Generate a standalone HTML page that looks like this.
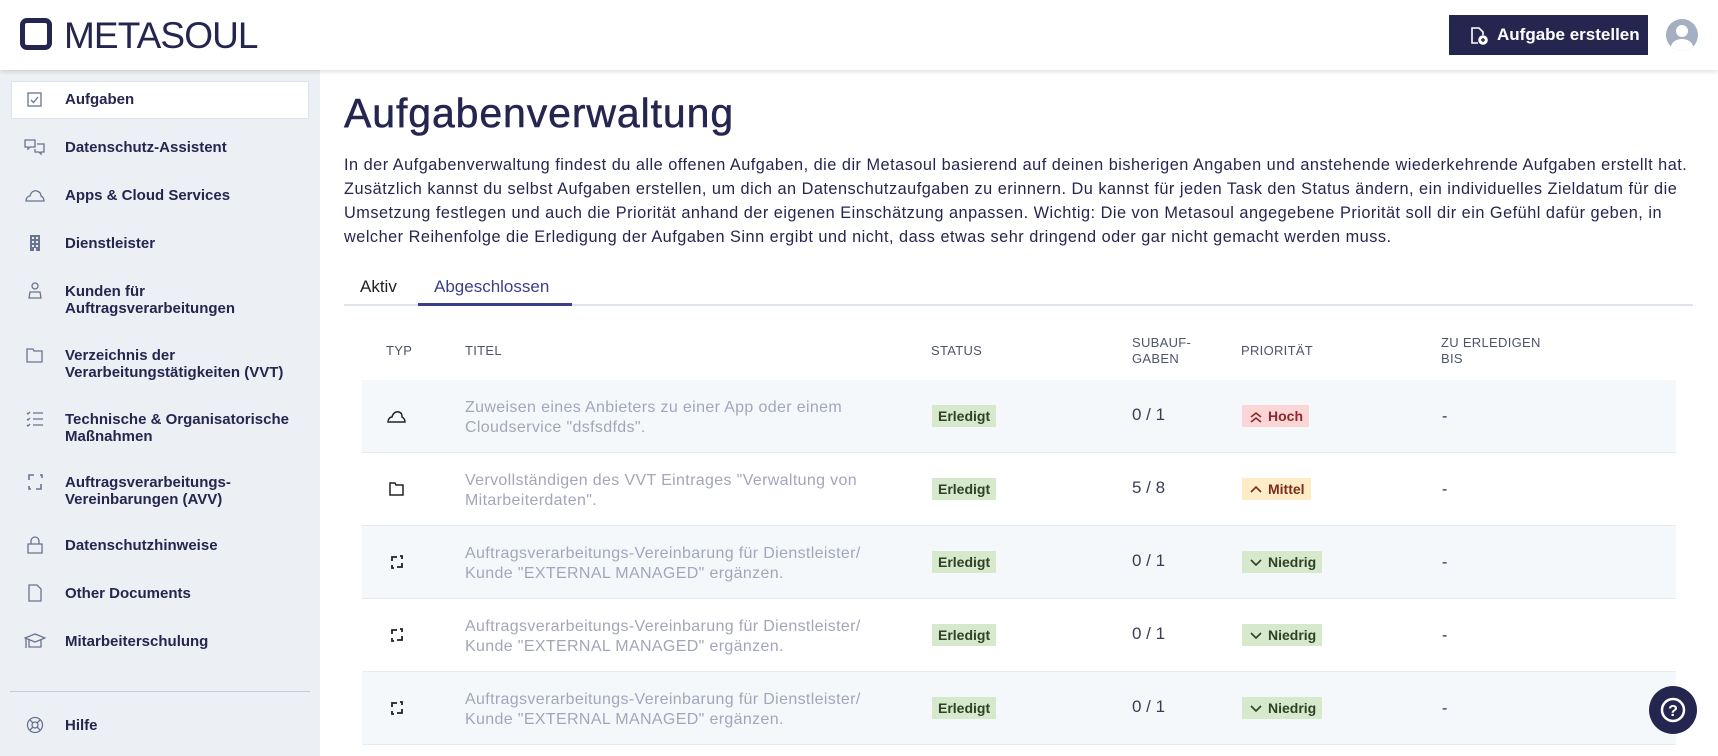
<!DOCTYPE html>
<html><head><meta charset="utf-8"><style>
*{box-sizing:border-box;margin:0;padding:0}
body{width:1718px;height:756px;overflow:hidden;background:#fff;font-family:"Liberation Sans",Arial,sans-serif;color:#25264f;position:relative}
.hdr{position:absolute;left:0;top:0;width:1718px;height:70px;background:#fff;box-shadow:0 2px 4px rgba(0,0,0,.12);z-index:2}
.logo{position:absolute;left:20px;top:18px;width:32px;height:32px;border:5px solid #25264f;border-radius:7px}
.logotxt{position:absolute;left:64px;top:15px;font-size:37px;letter-spacing:-0.9px;color:#25264f}
.btn{position:absolute;left:1449px;top:15px;width:199px;height:40px;background:#25264f;color:#fff;font-weight:bold;font-size:17px;line-height:40px;padding-left:48px}
.avatar{position:absolute;left:1666px;top:19px;width:32px;height:32px;border-radius:50%;background:#a4afc2;overflow:hidden}
.side{position:absolute;left:0;top:70px;width:320px;height:686px;background:#ecf0f5}
.item{position:absolute;left:65px;font-size:15px;font-weight:bold;line-height:17px;color:#25264f}
.ico{position:absolute;left:24px;width:22px;height:18px}
.act{position:absolute;left:11px;top:81px;width:298px;height:38px;background:#fff;border:1px solid #dde3ea}
h1{position:absolute;left:344px;top:90px;font-size:41px;font-weight:normal;letter-spacing:0.9px;color:#25264f;-webkit-text-stroke:0.5px #25264f}
.para{position:absolute;left:344px;top:153px;font-size:16.3px;line-height:24px;color:#25264f;white-space:nowrap;letter-spacing:0.5px}
.tabline{position:absolute;left:344px;top:304px;width:1349px;height:2px;background:#dfe3ec}
.tabu{position:absolute;left:418px;top:303px;width:154px;height:3px;background:#3a3f8c}
.tab{position:absolute;top:277px;font-size:17px}
.th{position:absolute;font-size:13px;color:#4d556b;letter-spacing:.3px;line-height:16px}
.row{position:absolute;left:362px;width:1314px;height:73px;border-bottom:1px solid #e6ebf1}
.row.l{background:#f5f8fb}
.t{position:absolute;left:103px;top:18px;font-size:16px;line-height:20px;color:#a3a6ba;letter-spacing:0.35px}
.st{position:absolute;left:570px;top:25px;background:#d7e9cd;color:#2d4125;font-weight:bold;font-size:14px;padding:3px 6px}
.sub{position:absolute;left:770px;top:25px;font-size:17px;color:#3a3d52}
.pr{position:absolute;left:880px;top:25px;font-size:14px;font-weight:bold;padding:3px 6px 3px 26px}
.pr svg{position:absolute;left:7px;top:6px}
.dash{position:absolute;left:1080px;top:28px;font-size:16px}
.ty{position:absolute;left:24px;top:28px}
.help{position:absolute;left:1649px;top:686px;width:48px;height:48px;border-radius:50%;background:#25264f}
</style></head><body>
<div class="hdr">
 <div class="logo"></div><div class="logotxt">METASOUL</div>
 <div class="btn"><svg style="position:absolute;left:20px;top:11px" width="20" height="20" viewBox="0 0 20 20" fill="none" stroke="#fff" stroke-width="1.6"><path d="M9 17H3V2h7l4 4v3"/><circle cx="14" cy="14" r="4" fill="#fff"/><path d="M14 12v4M12 14h4" stroke="#25264f" stroke-width="1.4"/></svg>Aufgabe erstellen</div>
 <div class="avatar"><div style="position:absolute;left:10px;top:6px;width:12px;height:12px;border-radius:50%;background:#fff"></div><div style="position:absolute;left:5px;top:20px;width:22px;height:16px;border-radius:50%;background:#fff"></div></div>
</div>
<div class="side"></div>
<div class="act"></div>
<svg class="ico" style="top:91px" viewBox="0 0 22 18" fill="none" stroke="#6a7390" stroke-width="1.3"><rect x="4" y="2" width="13" height="13"/><path d="M7 9l2.5 2.5L14 6"/></svg>
<div class="item" style="top:91px">Aufgaben</div>
<svg class="ico" style="top:138px" viewBox="0 0 22 18" fill="none" stroke="#6a7390" stroke-width="1.3"><path d="M1 2h10v7H6l-2 2V9H1z"/><path d="M13 6h7v8h-3v2l-2-2h-4v-3"/></svg>
<div class="item" style="top:139px">Datenschutz-Assistent</div>
<svg class="ico" style="top:186px" viewBox="0 0 22 18" fill="none" stroke="#6a7390" stroke-width="1.3"><path d="M2 15c0-3 2-5 4-5 1-4 4-6 7-5 3 1 4 3 4 5 2 1 3 3 3 5z"/></svg>
<div class="item" style="top:187px">Apps &amp; Cloud Services</div>
<svg class="ico" style="top:234px" viewBox="0 0 22 18" fill="#6a7390"><path d="M6 1h10v16H6zM8 3v2h2V3zm4 0v2h2V3zM8 7v2h2V7zm4 0v2h2V7zM8 11v2h2v-2zm4 0v2h2v-2zM10 14v3h2v-3z" fill-rule="evenodd"/></svg>
<div class="item" style="top:235px">Dienstleister</div>
<svg class="ico" style="top:282px" viewBox="0 0 22 18" fill="none" stroke="#6a7390" stroke-width="1.3"><circle cx="11" cy="4" r="3"/><path d="M5 16l1-6h10l1 6z"/></svg>
<div class="item" style="top:283px">Kunden für<br>Auftragsverarbeitungen</div>
<svg class="ico" style="top:346px" viewBox="0 0 22 18" fill="none" stroke="#6a7390" stroke-width="1.3"><path d="M3 3h6l1 2h8v11H3z"/></svg>
<div class="item" style="top:347px">Verzeichnis der<br>Verarbeitungstätigkeiten (VVT)</div>
<svg class="ico" style="top:410px" viewBox="0 0 22 18" fill="none" stroke="#6a7390" stroke-width="1.3"><path d="M3 3l1 1 2-2M3 9l1 1 2-2M3 15l1 1 2-2M9 3h10M9 9h10M9 15h10"/></svg>
<div class="item" style="top:411px">Technische &amp; Organisatorische<br>Maßnahmen</div>
<svg class="ico" style="top:473px" viewBox="0 0 22 18" fill="none" stroke="#6a7390" stroke-width="1.6"><path d="M5 7V2h5M17 11v5h-5M16 2h2v3M5 13v3h2"/></svg>
<div class="item" style="top:474px">Auftragsverarbeitungs-<br>Vereinbarungen (AVV)</div>
<svg class="ico" style="top:536px" viewBox="0 0 22 18" fill="none" stroke="#6a7390" stroke-width="1.3"><path d="M7 8V5a4 4 0 018 0v3M4 8h14v9H4z"/></svg>
<div class="item" style="top:537px">Datenschutzhinweise</div>
<svg class="ico" style="top:584px" viewBox="0 0 22 18" fill="none" stroke="#6a7390" stroke-width="1.3"><path d="M5 1h8l4 4v12H5z"/></svg>
<div class="item" style="top:585px">Other Documents</div>
<svg class="ico" style="top:632px" viewBox="0 0 22 18" fill="none" stroke="#6a7390" stroke-width="1.3"><path d="M1 6l10-4 10 4-10 4zM5 8v7h12V8M2 7v9"/></svg>
<div class="item" style="top:633px">Mitarbeiterschulung</div>
<div style="position:absolute;left:10px;top:691px;width:300px;height:1px;background:#c5cad3"></div>
<svg class="ico" style="top:716px" viewBox="0 0 22 18" fill="none" stroke="#6a7390" stroke-width="1.3"><circle cx="11" cy="9" r="7.5"/><circle cx="11" cy="9" r="3"/><path d="M6 4l3 3M16 4l-3 3M6 14l3-3M16 14l-3-3"/></svg>
<div class="item" style="top:717px">Hilfe</div>

<h1>Aufgabenverwaltung</h1>
<div class="para">In der Aufgabenverwaltung findest du alle offenen Aufgaben, die dir Metasoul basierend auf deinen bisherigen Angaben und anstehende wiederkehrende Aufgaben erstellt hat.<br>Zusätzlich kannst du selbst Aufgaben erstellen, um dich an Datenschutzaufgaben zu erinnern. Du kannst für jeden Task den Status ändern, ein individuelles Zieldatum für die<br>Umsetzung festlegen und auch die Priorität anhand der eigenen Einschätzung anpassen. Wichtig: Die von Metasoul angegebene Priorität soll dir ein Gefühl dafür geben, in<br>welcher Reihenfolge die Erledigung der Aufgaben Sinn ergibt und nicht, dass etwas sehr dringend oder gar nicht gemacht werden muss.</div>
<div class="tabline"></div><div class="tabu"></div>
<div class="tab" style="left:360px;color:#222">Aktiv</div>
<div class="tab" style="left:434px;color:#3a3f8c">Abgeschlossen</div>

<div class="th" style="left:386px;top:343px">TYP</div>
<div class="th" style="left:465px;top:343px">TITEL</div>
<div class="th" style="left:931px;top:343px">STATUS</div>
<div class="th" style="left:1132px;top:335px">SUBAUF-<br>GABEN</div>
<div class="th" style="left:1241px;top:343px">PRIORITÄT</div>
<div class="th" style="left:1441px;top:335px">ZU ERLEDIGEN<br>BIS</div>

<div class="row l" style="top:380px">
 <svg class="ty" width="22" height="16" viewBox="0 0 22 16" fill="none" stroke="#222" stroke-width="1.5"><path d="M2 14c0-3 2-5 4-5 1-4 4-6 7-5 3 1 3 3 3 5 2 1 3 3 3 5z"/></svg>
 <div class="t">Zuweisen eines Anbieters zu einer App oder einem<br>Cloudservice "dsfsdfds".</div>
 <div class="st">Erledigt</div><div class="sub">0 / 1</div>
 <div class="pr" style="background:#fcd6d6;color:#8a2a2a"><svg width="14" height="12" viewBox="0 0 14 12" fill="none" stroke="#8a2a2a" stroke-width="1.6"><path d="M2 6l5-4 5 4M2 11l5-4 5 4"/></svg>Hoch</div>
 <div class="dash">-</div>
</div>
<div class="row" style="top:453px">
 <svg class="ty" width="22" height="16" viewBox="0 0 22 16" fill="none" stroke="#222" stroke-width="1.5"><path d="M4 2h5l1 2h7v10H4z"/></svg>
 <div class="t">Vervollständigen des VVT Eintrages "Verwaltung von<br>Mitarbeiterdaten".</div>
 <div class="st">Erledigt</div><div class="sub">5 / 8</div>
 <div class="pr" style="background:#feecc6;color:#7a2e1a"><svg width="14" height="12" viewBox="0 0 14 12" fill="none" stroke="#7a2e1a" stroke-width="1.6"><path d="M2 8l5-5 5 5"/></svg>Mittel</div>
 <div class="dash">-</div>
</div>
<div class="row l" style="top:526px">
 <svg class="ty" width="22" height="16" viewBox="0 0 22 16" fill="none" stroke="#222" stroke-width="1.8"><path d="M6 7V3h5M16 9v4h-5M14 2h2v3M6 11v3h2"/></svg>
 <div class="t">Auftragsverarbeitungs-Vereinbarung für Dienstleister/<br>Kunde "EXTERNAL MANAGED" ergänzen.</div>
 <div class="st">Erledigt</div><div class="sub">0 / 1</div>
 <div class="pr" style="background:#d7e9cd;color:#2d4125"><svg width="14" height="12" viewBox="0 0 14 12" fill="none" stroke="#2d4125" stroke-width="1.6"><path d="M2 3l5 5 5-5"/></svg>Niedrig</div>
 <div class="dash">-</div>
</div>
<div class="row" style="top:599px">
 <svg class="ty" width="22" height="16" viewBox="0 0 22 16" fill="none" stroke="#222" stroke-width="1.8"><path d="M6 7V3h5M16 9v4h-5M14 2h2v3M6 11v3h2"/></svg>
 <div class="t">Auftragsverarbeitungs-Vereinbarung für Dienstleister/<br>Kunde "EXTERNAL MANAGED" ergänzen.</div>
 <div class="st">Erledigt</div><div class="sub">0 / 1</div>
 <div class="pr" style="background:#d7e9cd;color:#2d4125"><svg width="14" height="12" viewBox="0 0 14 12" fill="none" stroke="#2d4125" stroke-width="1.6"><path d="M2 3l5 5 5-5"/></svg>Niedrig</div>
 <div class="dash">-</div>
</div>
<div class="row l" style="top:672px">
 <svg class="ty" width="22" height="16" viewBox="0 0 22 16" fill="none" stroke="#222" stroke-width="1.8"><path d="M6 7V3h5M16 9v4h-5M14 2h2v3M6 11v3h2"/></svg>
 <div class="t">Auftragsverarbeitungs-Vereinbarung für Dienstleister/<br>Kunde "EXTERNAL MANAGED" ergänzen.</div>
 <div class="st">Erledigt</div><div class="sub">0 / 1</div>
 <div class="pr" style="background:#d7e9cd;color:#2d4125"><svg width="14" height="12" viewBox="0 0 14 12" fill="none" stroke="#2d4125" stroke-width="1.6"><path d="M2 3l5 5 5-5"/></svg>Niedrig</div>
 <div class="dash">-</div>
</div>
<div class="help"><svg width="48" height="48" viewBox="0 0 48 48"><circle cx="24" cy="24" r="11" fill="none" stroke="#fff" stroke-width="2.5"/><text x="24" y="30" text-anchor="middle" font-family="Liberation Sans" font-weight="bold" font-size="16" fill="#fff">?</text></svg></div>
</body></html>
